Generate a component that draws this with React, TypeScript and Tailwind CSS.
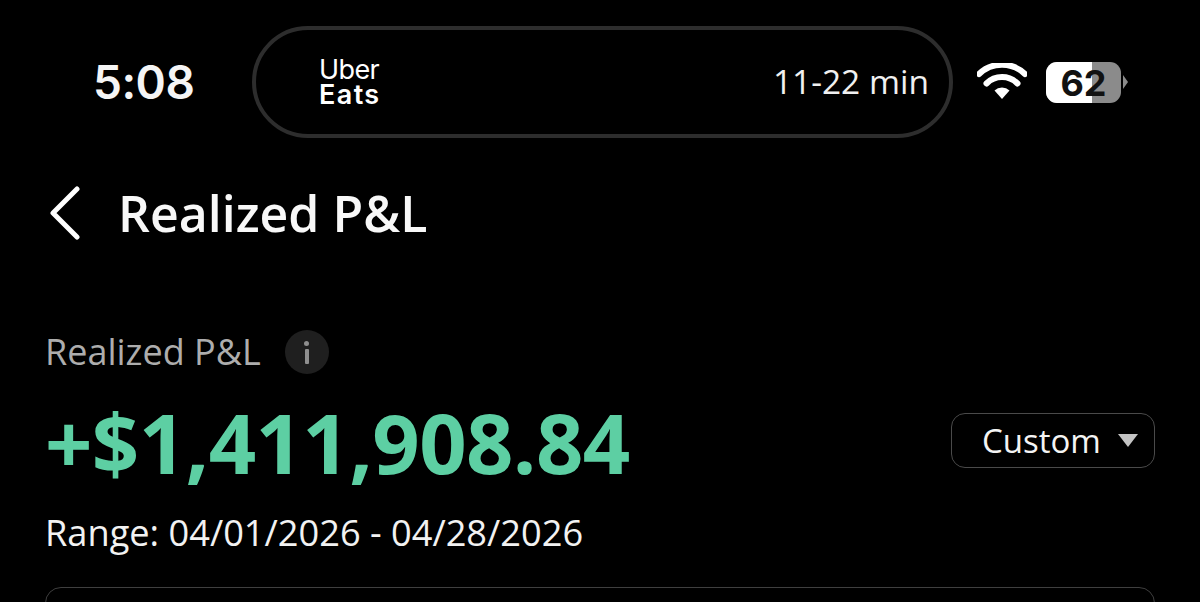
export default function App() {
  return (
    <div className="w-[1200px] h-[602px] overflow-hidden bg-black text-white flex flex-col font-['Open_Sans',sans-serif]">
      <div className="flex items-center h-[112px] mt-[26px] shrink-0">
        <div className="w-[252px] pl-[93px] text-[46px] leading-none font-semibold font-['Inter',sans-serif] tracking-[-0.5px] text-[#f5f5f5]">5:08</div>
        <div className="w-[701px] h-[112px] border-[4px] border-[#2d2d2d] rounded-[56px] flex items-center justify-between pl-[63px] pr-[20px]">
          <div className="font-['Inter',sans-serif] text-[27px] leading-[25px] tracking-[-0.6px] mt-[-1px]">
            <div className="font-normal">Uber</div>
            <div className="font-semibold tracking-[1.4px]">Eats</div>
          </div>
          <div className="text-[33.5px] leading-none font-['Open_Sans',sans-serif] font-normal text-[#f0f0f0]">11-22 min</div>
        </div>
        <svg className="ml-[24px] mt-[-1px]" width="50" height="38" viewBox="0 0 50 38" fill="none">
          <path d="M25 36 L17.5 27.5 A11 11 0 0 1 32.5 27.5 Z" fill="#fff" />
          <path d="M9.5 19.5 A22 22 0 0 1 40.5 19.5" stroke="#fff" strokeWidth="6" strokeLinecap="round" transform="translate(0 1)" />
          <path d="M2 10 A33 33 0 0 1 48 10" stroke="#fff" strokeWidth="6" strokeLinecap="round" transform="translate(0 1)" />
        </svg>
        <div className="ml-[19px] relative w-[75px] h-[41px] rounded-[11px] overflow-hidden bg-[#8b8b8b] shrink-0 mt-[1px]">
          <div className="absolute left-0 top-0 bottom-0 w-[46px] bg-white" />
          <div className="absolute inset-0 flex items-center justify-center text-[36px] font-bold text-[#111] font-['Inter',sans-serif] leading-none">62</div>
        </div>
        <svg className="ml-[2px]" width="6" height="14" viewBox="0 0 6 14"><path d="M0 0 L5 7 L0 14 Z" fill="#8b8b8b" /></svg>
      </div>

      <div className="flex items-center h-[72px] mt-[39px] pl-[50px] shrink-0">
        <svg width="30" height="54" viewBox="0 0 30 54" fill="none"><path d="M27 3 L3 27 L27 51" stroke="#fff" strokeWidth="5" strokeLinecap="round" strokeLinejoin="round" /></svg>
        <div className="ml-[38px] text-[50px] leading-none font-semibold text-[#f8f8f8]">Realized P&amp;L</div>
      </div>

      <div className="flex items-center mt-[80px] pl-[45px] h-[46px] shrink-0">
        <div className="text-[36px] leading-none text-[#adadad]">Realized P&amp;L</div>
        <div className="ml-[24px] w-[44px] h-[44px] rounded-full bg-[#1f1f1f] flex flex-col items-center justify-center gap-[3px]">
          <div className="w-[5px] h-[5px] rounded-full bg-[#8f8f8f]" />
          <div className="w-[4px] h-[15px] rounded-[1px] bg-[#8f8f8f]" />
        </div>
      </div>

      <div className="flex items-center justify-between pl-[45px] pr-[45px] mt-[26px] h-[80px] shrink-0">
        <div className="text-[83px] leading-none font-bold text-[#5dcfa3] tracking-[-0.6px]">+$1,411,908.84</div>
        <div className="w-[204px] h-[55px] border-[1.5px] border-[#4a4a4a] rounded-[14px] flex items-center pl-[30px] mt-[-2px]">
          <span className="text-[33px] leading-none text-[#f4f4f4]">Custom</span>
          <svg className="ml-[17px] mt-[1px]" width="20" height="13" viewBox="0 0 20 13"><path d="M0 0 H20 L10 13 Z" fill="#c4c4c4" /></svg>
        </div>
      </div>

      <div className="pl-[45px] mt-[28px] text-[36.2px] leading-[46px] text-[#f2f2f2] shrink-0">Range: 04/01/2026 - 04/28/2026</div>

      <div className="mx-[45px] mt-[32px] h-[40px] shrink-0 border-[1.5px] border-[#3f3f3f] rounded-t-[16px]" />
    </div>
  );
}
